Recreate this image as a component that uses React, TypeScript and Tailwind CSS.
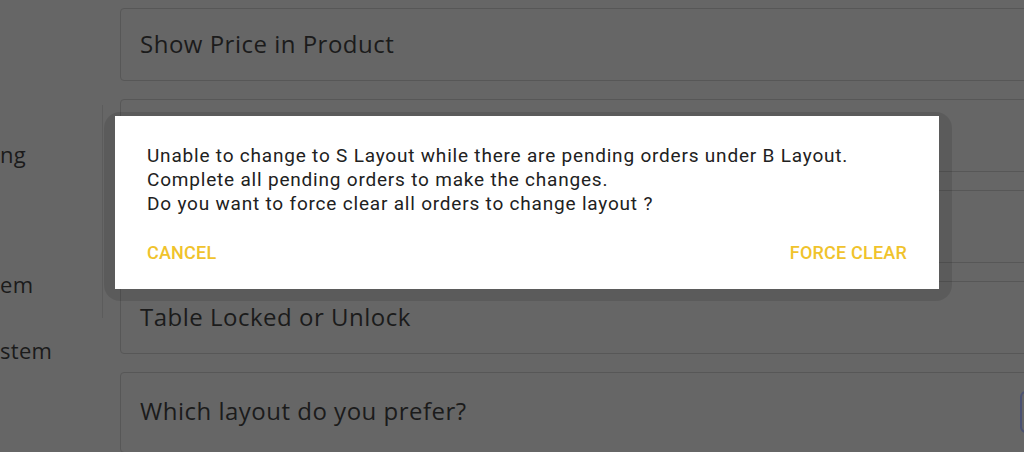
import React from "react";

export default function App() {
  const card =
    "flex items-center rounded-[4px] border border-[#575757] pl-[19px] text-[24px] tracking-[0.5px] text-[#1b1b1b] shrink-0";
  return (
    <div
      className="relative h-[452px] w-[1024px] overflow-hidden bg-[#666666]"
      style={{ fontFamily: '"Open Sans", sans-serif' }}
    >
      <div className="flex h-full">
        {/* sidebar */}
        <div className="relative w-[104px] shrink-0">
          <div className="mt-[105px] h-[213px] w-[103px] border-r border-[#5c5c5c]" />
          <div className="absolute left-0 top-[139px] text-[22px] leading-[30px] tracking-[0.3px] text-[#1b1b1b]">ng</div>
          <div className="absolute left-0 top-[269px] text-[22px] leading-[30px] tracking-[0.3px] text-[#1b1b1b]">em</div>
          <div className="absolute left-0 top-[335px] text-[22px] leading-[30px] tracking-[0.3px] text-[#1b1b1b]">stem</div>
        </div>
        {/* main column */}
        <div className="ml-[16px] flex flex-1 flex-col gap-[18px] pt-[8px] -mr-[20px]">
          <div className={`${card} h-[73px] pb-[1px]`}>Show Price in Product</div>
          <div className={`${card} h-[73px]`}>Show Table</div>
          <div className={`${card} h-[73px]`}>Layout</div>
          <div className={`${card} h-[73px] pb-[2px]`}>Table Locked or Unlock</div>
          <div className={`${card} relative h-[81px] pl-[16px] pb-[3px]`}>
            Which layout do you prefer?
            <div className="absolute left-[899px] top-[18px] h-[42px] w-[40px] rounded-[6px] border-2 border-[#4b5272]" />
          </div>
        </div>
      </div>

      {/* dialog */}
      <div className="absolute left-[115px] top-[116px] h-[173px] w-[824px]">
        <div className="absolute -left-[11px] -right-[13px] -top-[4px] -bottom-[12px] rounded-[16px] bg-black/[0.1]" />
        <div
          className="relative flex h-full flex-col bg-white px-[32px] pt-[28px]"
          style={{ fontFamily: 'Roboto, sans-serif' }}
        >
          <div className="text-[19px] leading-[24px] tracking-[0.8px] text-[#212121]">
            <div>Unable to change to S Layout while there are pending orders under B Layout.</div>
            <div>Complete all pending orders to make the changes.</div>
            <div>Do you want to force clear all orders to change layout ?</div>
          </div>
          <div className="mt-[25px] flex items-center justify-between text-[18px] font-medium uppercase leading-[24px] tracking-[0.2px] text-[#f0c32c]">
            <span>Cancel</span>
            <span>Force Clear</span>
          </div>
        </div>
      </div>
    </div>
  );
}
